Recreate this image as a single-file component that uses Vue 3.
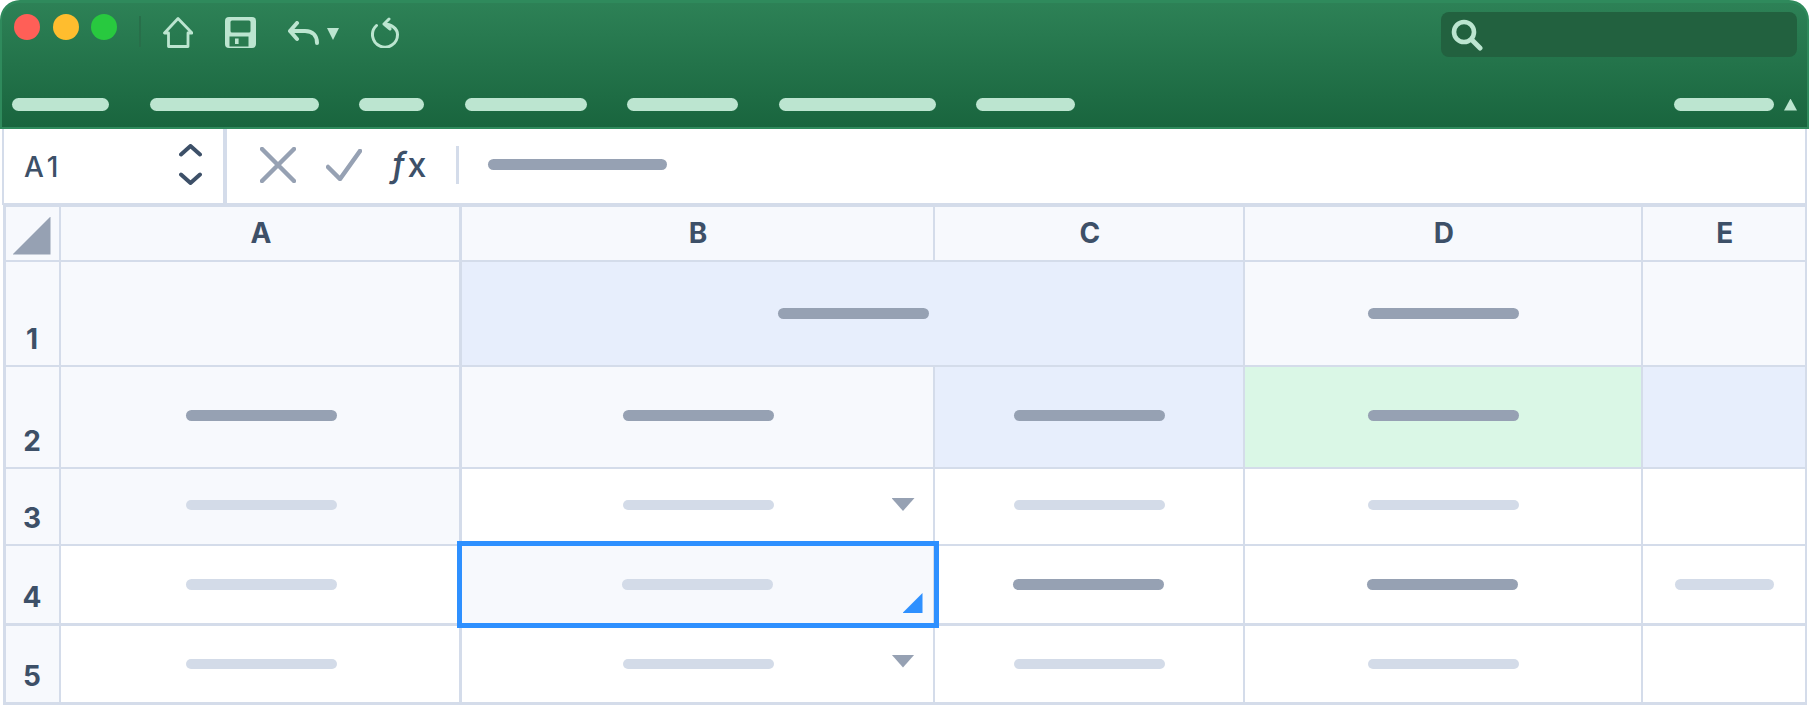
<template>
  <div class="sheet-app">
    <header class="ribbon">
      <div class="ribbon-top">
        <div class="dots">
          <span class="dot red"></span>
          <span class="dot yellow"></span>
          <span class="dot green"></span>
        </div>
        <span class="ribbon-divider"></span>
        <div class="tools">
          <svg class="tool" width="30" height="31" viewBox="0 0 30 31" fill="none" stroke="#bce5d0" stroke-width="2.8" stroke-linejoin="round">
            <path d="M15 1.5 1.5 16H5.5V29.5H25V16H29Z" />
          </svg>
          <svg class="tool" width="31" height="31" viewBox="0 0 31 31">
            <rect width="31" height="31" rx="4" fill="#bce5d0" />
            <rect x="5.5" y="3.5" width="20" height="12" rx="1.5" fill="#2a7b50" />
            <rect x="4.5" y="19.5" width="19" height="10" fill="#2a7b50" />
            <rect x="10" y="21.5" width="3.6" height="5.5" fill="#bce5d0" />
          </svg>
          <div class="undo">
            <svg width="31" height="24" viewBox="0 0 31 24" fill="none" stroke="#bce5d0" stroke-width="4" stroke-linecap="round" stroke-linejoin="round">
              <path d="M9 2 2 10 9 18M2 10H17C25 10 29 15 29 22" />
            </svg>
            <span class="undo-caret"></span>
          </div>
          <svg class="tool" width="28" height="31" viewBox="0 0 28 31" fill="none" stroke="#bce5d0" stroke-width="3" stroke-linecap="round" stroke-linejoin="round">
            <path d="M18 2 13 7 19 12M13 7C20 7 26.5 11.5 26.5 17.5A12.5 12.5 0 1 1 5.5 8.5" />
          </svg>
        </div>
        <div class="search">
          <svg width="32" height="32" viewBox="0 0 32 32" fill="none" stroke="#bce5d0" stroke-linecap="round">
            <circle cx="13" cy="13" r="10" stroke-width="4.6" />
            <path d="M21 21 29 29" stroke-width="5" />
          </svg>
        </div>
      </div>
      <nav class="ribbon-menu">
        <span v-for="w in menuWidths" :key="w" class="menu-pill" :style="{ width: w + 'px' }"></span>
        <div class="menu-end">
          <span class="menu-pill end-pill"></span>
          <span class="collapse-caret"></span>
        </div>
      </nav>
    </header>

    <section class="formula-bar">
      <div class="name-box">
        <span class="cell-name">A1</span>
        <svg width="23" height="41" viewBox="0 0 23 41" fill="none" stroke="#3d5068" stroke-width="4" stroke-linecap="round" stroke-linejoin="round">
          <path d="M2 10.5 11.5 2 21 10.5M2 30.5 11.5 39 21 30.5" />
        </svg>
      </div>
      <div class="formula-tools">
        <svg width="36" height="36" viewBox="0 0 36 36" fill="none" stroke="#96a1b3" stroke-width="4.5" stroke-linecap="round">
          <path d="M2 2 34 34M34 2 2 34" />
        </svg>
        <svg width="36" height="32" viewBox="0 0 36 32" fill="none" stroke="#96a1b3" stroke-width="4.5" stroke-linecap="round" stroke-linejoin="round">
          <path d="M2 18 14 30 34 2" />
        </svg>
        <span class="fx"><i>ƒ</i>x</span>
        <span class="formula-divider"></span>
        <span class="formula-value"></span>
      </div>
    </section>

    <section class="grid">
      <div class="head corner"><span class="corner-mark"></span></div>
      <div v-for="c in columns" :key="c" class="head col-head">{{ c }}</div>
      <template v-for="row in rows" :key="row.n">
        <div class="head row-head"><span>{{ row.n }}</span></div>
        <div
          v-for="(cell, i) in row.cells"
          :key="i"
          class="cell"
          :class="[cell.fill, cell.flush && 'flush', cell.span && 'span2', cell.selected && 'selected', row.raised && 'raised']"
        >
          <span v-if="cell.bar" class="bar" :class="[cell.bar, cell.short && 'short']"></span>
          <span v-if="cell.caret" class="drop-caret"></span>
          <template v-if="cell.selected">
            <span class="selection"></span>
            <span class="fill-handle"></span>
          </template>
        </div>
      </template>
    </section>
  </div>
</template>

<script setup>
const menuWidths = [97, 169, 65, 122, 111, 157, 99]
const columns = ['A', 'B', 'C', 'D', 'E']

const rows = [
  {
    n: 1,
    cells: [
      { fill: 'gray' },
      { fill: 'blue', bar: 'dark', span: true },
      { fill: 'gray', bar: 'dark' },
      { fill: 'gray' },
    ],
  },
  {
    n: 2,
    raised: true,
    cells: [
      { fill: 'gray', bar: 'dark' },
      { fill: 'gray', bar: 'dark' },
      { fill: 'blue', bar: 'dark' },
      { fill: 'mint', bar: 'dark' },
      { fill: 'blue' },
    ],
  },
  {
    n: 3,
    raised: true,
    cells: [
      { fill: 'gray', bar: 'light' },
      { bar: 'light', caret: true },
      { bar: 'light' },
      { bar: 'light' },
      {},
    ],
  },
  {
    n: 4,
    cells: [
      { bar: 'light' },
      { fill: 'gray', bar: 'light', selected: true, flush: true },
      { bar: 'dark', flush: true },
      { bar: 'dark', flush: true },
      { bar: 'light', short: true },
    ],
  },
  {
    n: 5,
    cells: [
      { bar: 'light' },
      { bar: 'light', caret: true },
      { bar: 'light' },
      { bar: 'light' },
      {},
    ],
  },
]
</script>

<style>
html, body { margin: 0; background: #fff; }
</style>

<style scoped>
.sheet-app { width: 1809px; height: 705px; overflow: hidden; background: #fff; font-family: Inter, "Liberation Sans", sans-serif; }

.ribbon { box-sizing: border-box; height: 129px; padding: 9px 10px 16px; border: 2px solid #2f8a5c; border-top-width: 3px; border-radius: 20px 20px 0 0; background: linear-gradient(#2d8156, #19653e); }
.ribbon-top { display: flex; height: 45px; }
.dots { display: flex; gap: 12.5px; margin: 2px 0 0 2px; }
.dot { width: 26px; height: 26px; border-radius: 50%; }
.red { background: #ff5f57; }
.yellow { background: #ffbd2e; }
.green { background: #28c93f; }
.ribbon-divider { width: 2px; height: 31px; margin: 4px 22px 0; background: #286f4a; }
.tools { display: flex; gap: 32px; margin-top: 5px; height: 31px; }
.undo { display: flex; gap: 8px; padding-top: 4px; }
.undo svg { display: block; }
.undo-caret { width: 12px; height: 12px; margin-top: 7px; background: #bce5d0; clip-path: polygon(0 0, 100% 0, 50% 100%); }
.search { box-sizing: border-box; width: 356px; height: 45px; margin-left: auto; padding: 7px 10px; border-radius: 8px; background: #22613f; }
.search svg { display: block; }

.ribbon-menu { display: flex; gap: 40.5px; margin-top: 41px; }
.menu-pill { height: 13px; border-radius: 7px; background: #bce5d0; }
.menu-end { display: flex; align-items: center; gap: 10px; margin-left: auto; }
.end-pill { width: 100px; }
.collapse-caret { width: 13px; height: 12px; background: #bce5d0; clip-path: polygon(50% 0, 100% 100%, 0 100%); }

.formula-bar { box-sizing: border-box; display: flex; height: 75.5px; margin: 0 2px; border: 2px solid #d4dcea; border-width: 0 2px 2px; }
.name-box { box-sizing: border-box; display: flex; align-items: center; justify-content: space-between; width: 223px; padding: 0 21px 2px 20px; border-right: 4px solid #d4dcea; }
.cell-name { padding-top: 4px; font-size: 28px; font-weight: 500; letter-spacing: 4px; color: #3d5068; }
.formula-tools { display: flex; align-items: center; gap: 29.5px; padding: 0 0 2px 33px; }
.fx { width: 35px; font-size: 34px; line-height: 36px; font-weight: 500; white-space: nowrap; color: #3d5068; }
.fx i { margin-right: 2px; font-size: 35px; }
.formula-divider { width: 3px; height: 38px; background: #d4dcea; }
.formula-value { width: 179px; height: 11px; border-radius: 6px; background: #96a1b3; }

.grid { display: grid; grid-template-columns: 53px 398px 471px 307.5px 395.5px 161.5px; grid-template-rows: 52.5px 102.5px 99.5px 74.5px 77px 76.5px; gap: 2.5px; width: max-content; margin-left: 3px; padding: 2.5px; background: #d4dcea; }
.head { display: flex; justify-content: center; background: #f7f9fd; font-size: 28px; font-weight: 700; color: #3d5068; }
.corner { position: relative; }
.corner-mark { position: absolute; right: 8px; bottom: 5px; width: 38px; height: 38px; background: #96a1b3; clip-path: polygon(100% 0, 100% 100%, 0 100%); }
.col-head { align-items: center; padding-left: 2px; }
.row-head { align-items: flex-end; }
.row-head span { line-height: 1; padding-bottom: 12px; }

.cell { position: relative; display: flex; align-items: center; justify-content: center; padding-left: 2px; background: #fff; }
.raised { padding-bottom: 3px; }
.flush { padding-left: 0; }
.span2 { grid-column: span 2; }
.selected { z-index: 1; }
.gray { background: #f7f9fd; }
.blue { background: #e7eefc; }
.mint { background: #daf7e6; }

.bar { width: 151px; height: 10.5px; border-radius: 6px; }
.bar.dark { background: #96a1b3; }
.bar.light { background: #d3dbe8; }
.bar.short { width: 99px; }
.drop-caret { position: absolute; right: 18px; top: 29px; width: 23px; height: 13px; background: #96a1b3; clip-path: polygon(0 0, 100% 0, 50% 100%); }
.selection { position: absolute; inset: -5px -6px -5px -5px; border: 5px solid #2e90ff; pointer-events: none; }
.fill-handle { position: absolute; right: 10px; bottom: 10px; width: 20px; height: 20px; background: #2e90ff; clip-path: polygon(100% 0, 100% 100%, 0 100%); }
</style>
